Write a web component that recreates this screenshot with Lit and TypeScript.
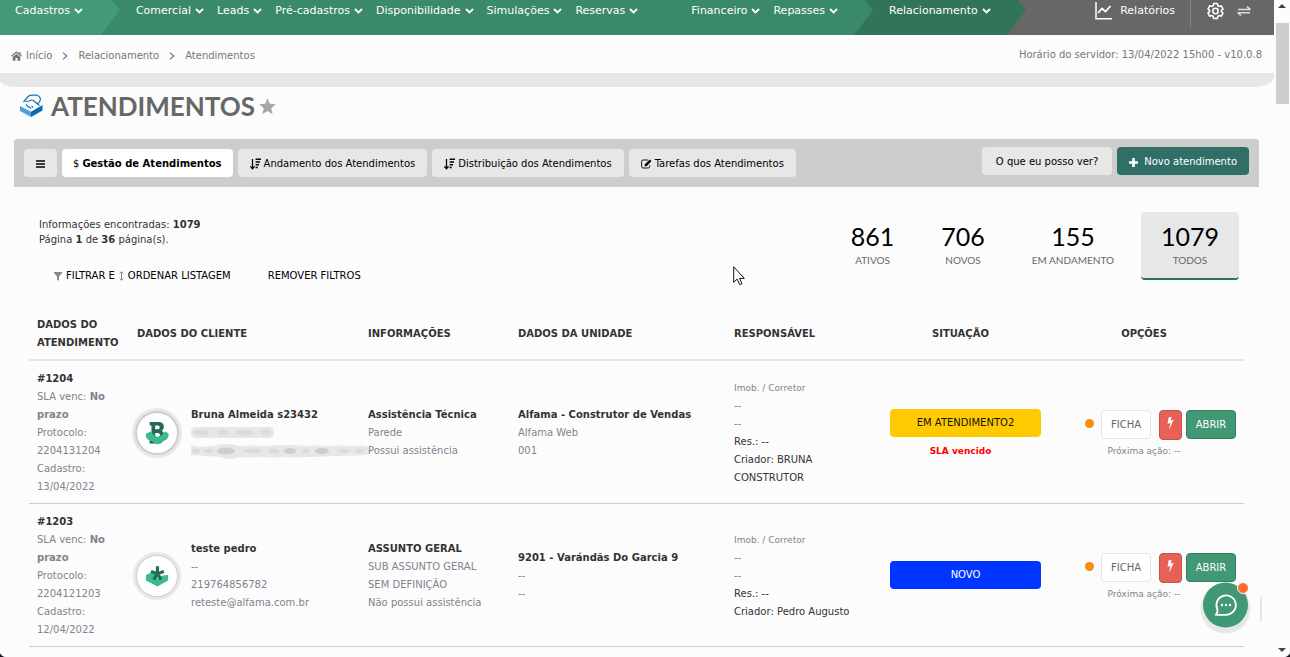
import { LitElement, html, css, svg, nothing } from "lit";
import { customElement } from "lit/decorators.js";
import { classMap } from "lit/directives/class-map.js";

const chevron = html`<svg class="chev" width="9" height="6" viewBox="0 0 9 6" aria-hidden="true">
  <path d="M1 1l3.5 3.4L8 1" fill="none" stroke="currentColor" stroke-width="1.9" />
</svg>`;

const crumbArrow = html`<svg width="6" height="8" viewBox="0 0 6 8" aria-hidden="true">
  <path d="M1 .6L4.7 4 1 7.4" fill="none" stroke="currentColor" stroke-width="1.2" />
</svg>`;

const sortIcon = html`<svg width="11" height="12" viewBox="0 0 11 12" aria-hidden="true">
  <path d="M2.5 1v9.4M.4 8.4l2.1 2.4 2.1-2.4" fill="none" stroke="currentColor" stroke-width="1.3" />
  <path d="M5.6 1.2H11M5.6 4H10M5.6 6.8H9M5.6 9.6H7.7" stroke="currentColor" stroke-width="1.5" />
</svg>`;

const editIcon = html`<svg width="11" height="10" viewBox="0 0 11 10" aria-hidden="true">
  <path d="M7 1H2Q.6 1 .6 2.4v5Q.6 9 2 9h5.2q1.5 0 1.5-1.5V6.2" fill="none" stroke="currentColor" stroke-width=".9" />
  <path d="M3.7 7.2V5.4L8.8.5l1.700 1.600-4.900 5.100z" fill="currentColor" />
</svg>`;

const menuIcon = html`<svg width="9" height="8" viewBox="0 0 9 8" aria-hidden="true">
  <path d="M0 1h9M0 4h9M0 7h9" stroke="currentColor" stroke-width="1.4" />
</svg>`;

const plusIcon = html`<svg width="9" height="9" viewBox="0 0 9 9" aria-hidden="true">
  <path d="M4.5 0v9M0 4.5h9" stroke="currentColor" stroke-width="2.6" />
</svg>`;

const boltIcon = html`<svg width="7" height="12" viewBox="0 0 7 12" aria-hidden="true">
  <path d="M1.7.3h3L3.6 3.4l3-.7L2.8 11.6h-.6L3.5 6 .5 6.700z" fill="currentColor" />
</svg>`;

const letterLogo = svg`
  <path fill="#25695a" fill-rule="evenodd" d="M5 1h10.500Q20.500 1.300 20.500 6.400 20.500 9.200 18 10.600 21 12 21 16 20.500 24 15.500 24.500H5V20h2V5H5zM11 5v4h3q2-.2 2-2 0-1.800-2-2zM11 13v4.500h3q2.300-.3 2.300-2.200 0-2-2.300-2.300z" />
  <path fill="#3dba92" d="M1 13.500l5.500-2 3.500 4.300q3.500 2.500 7.500 0l4.500-4.300 3.500 2v3.500q-2 4-6 5l-6 3.500-6-3.500q-5-1-6.500-5z" />`;

const starLogo = svg`
  <path fill="#3dba92" d="M1 12l6-3 4 2 3 5 5-3.500 6-.5v6L13.500 24.500 1 18z" />
  <path stroke="#25695a" stroke-width="3.400" d="M13.500 10.500V2.500M13.500 10.500L6.500 8M13.500 10.500L20.500 8M13.500 10.500L9.500 17M13.500 10.500L17.500 17" />`;

interface Ticket {
  id: string;
  protocol: string;
  date: string;
  logo: unknown;
  ring: string;
  client: string;
  contact: string[];
  hidden: boolean;
  subject: string;
  details: string[];
  unit: string;
  unitDetails: string[];
  creator: string;
  status: string;
  kind: string;
  late: boolean;
}

const tickets: Ticket[] = [
  {
    id: "#1204", protocol: "2204131204", date: "13/04/2022", logo: letterLogo, ring: "thick",
    client: "Bruna Almeida s23432", contact: [], hidden: true,
    subject: "Assistência Técnica", details: ["Parede", "Possui assistência"],
    unit: "Alfama - Construtor de Vendas", unitDetails: ["Alfama Web", "001"],
    creator: "BRUNA CONSTRUTOR", status: "EM ATENDIMENTO2", kind: "progress", late: true,
  },
  {
    id: "#1203", protocol: "2204121203", date: "12/04/2022", logo: starLogo, ring: "thin",
    client: "teste pedro", contact: ["--", "219764856782", "reteste@alfama.com.br"], hidden: false,
    subject: "ASSUNTO GERAL", details: ["SUB ASSUNTO GERAL", "SEM DEFINIÇÃO", "Não possui assistência"],
    unit: "9201 - Varándãs Do Garcia 9", unitDetails: ["--", "--"],
    creator: "Pedro Augusto", status: "NOVO", kind: "new", late: false,
  },
];

@customElement("app-header")
class AppHeader extends LitElement {
  static styles = css`
    :host { display: block; }
    nav {
      display: flex; height: 35px; background: #676767; color: #fff;
      font: 11px/20px "DejaVu Sans", Verdana, sans-serif; white-space: nowrap;
    }
    .seg {
      display: flex; align-items: flex-start; gap: 13px; padding: 0 35px 0 36px;
      margin-right: -20px; flex: none;
      clip-path: polygon(0 0, calc(100% - 8px) 0, 100% 10px, calc(100% - 19px) 100%, 0 100%);
    }
    .one { background: #439a76; padding-left: 15px; padding-right: 37px; z-index: 3; }
    .two { background: #3a8968; z-index: 2; }
    .three { background: #317457; z-index: 1; }
    .seg, .tools { position: relative; }
    a { color: inherit; text-decoration: none; display: flex; align-items: center; gap: 4px; height: 22px; }
    .apart { margin-left: 40px; }
    .tools { margin-left: auto; display: flex; padding-right: 23px; }
    .tools a { height: 21px; }
    .report { gap: 8px; }
    .line { width: 1px; height: 28px; background: #858585; margin: 0 16px 0 15px; }
    .swap { margin-left: 13px; }
  `;

  private item(label: string, cls = "") {
    return html`<a href="#" class=${cls}>${label}${chevron}</a>`;
  }

  render() {
    return html`<nav>
      <div class="seg one">${this.item("Cadastros")}</div>
      <div class="seg two">
        ${["Comercial", "Leads", "Pré-cadastros", "Disponibilidade", "Simulações", "Reservas"].map((l) => this.item(l))}
        ${this.item("Financeiro", "apart")}${this.item("Repasses")}
      </div>
      <div class="seg three">${this.item("Relacionamento")}</div>
      <div class="tools">
        <a href="#" class="report">
          <svg width="17" height="18" viewBox="0 0 17 18" aria-hidden="true">
            <path d="M1 0v16.700H17" fill="none" stroke="#fff" stroke-width="1.500" />
            <path d="M3 11l4-4.500 3.500 3L15.500 4" fill="none" stroke="#fff" stroke-width="1.800" />
          </svg>Relatórios</a>
        <span class="line"></span>
        <a href="#" aria-label="Configurações">
          <svg width="17" height="18" viewBox="0 0 24 24" aria-hidden="true" fill="none" stroke="#fff" stroke-width="2.200" stroke-linejoin="round">
            <path d="M9.500 1.500h5l.8 3 1.900 1 3-.8 2.400 4.300-2.200 2.100v1.800l2.200 2.100-2.400 4.300-3-.8-1.900 1-.8 3h-5l-.8-3-1.900-1-3 .8L1.400 15l2.200-2.100v-1.800L1.400 9l2.400-4.300 3 .8 1.900-1z" />
            <circle cx="12" cy="12" r="3.800" />
          </svg></a>
        <a href="#" class="swap" aria-label="Alternar">
          <svg width="14" height="10" viewBox="0 0 14 10" aria-hidden="true" fill="none" stroke="#ddd" stroke-width="1.500">
            <path d="M1 3.400h12.500M10 .6l3.300 2.800M13 6.700H.500M4 9.500L.7 6.700" />
          </svg></a>
      </div>
    </nav>`;
  }
}

@customElement("app-root")
class AppRoot extends LitElement {
  static styles = css`
    :host {
      display: flex; height: 100vh; overflow: hidden; background: #fcfcfc; position: relative;
      font: 10px/18px "DejaVu Sans", Verdana, sans-serif; color: #333;
    }
    main { flex: 1; min-width: 0; overflow: hidden; }
    a { color: inherit; text-decoration: none; }
    button { font: inherit; color: inherit; border: 0; padding: 0; background: none; cursor: pointer; }
    svg { flex: none; display: block; }

    .crumbs { display: flex; align-items: center; justify-content: space-between; height: 36px; padding: 2px 12px 0 11px; color: #777; }
    .trail { display: flex; align-items: center; gap: 10px; padding-top: 2px; }
    .home { display: flex; align-items: center; gap: 4px; }
    .band { height: 14px; background: #e7e7e7; border-radius: 0 0 20px 16px / 0 0 10px 7px; }

    .title { display: flex; align-items: center; height: 38px; padding: 0 20px; gap: 8px; }
    h1 { margin: 0; font: 700 26px/32px Lato, sans-serif; color: #676767; }
    .star { margin-left: -4px; }

    .toolbar {
      display: flex; justify-content: space-between; align-items: flex-start;
      margin: 14px 15px 0 14px; padding: 8px 10px 10px; background: #cdcdcd; border-radius: 3px 3px 0 0;
    }
    .group { display: flex; gap: 5px; }
    .tabs { margin-top: 2px; }
    .btn {
      display: flex; align-items: center; gap: 3px; height: 28px; padding: 2px 12px 0;
      border-radius: 4px; background: #e7e7e7; color: #000; white-space: nowrap;
    }
    .active { background: #fff; font-weight: 700; padding: 2px 11px 0; }
    .dollar { font-weight: 400; }
    .help { padding: 2px 14px 0; }
    .primary { background: #2f6f67; color: #fff; gap: 6px; }

    .summary { display: flex; justify-content: space-between; padding: 25px 35px 0 39px; }
    .found { padding-top: 5px; line-height: 15px; }
    .filters { display: flex; gap: 7px; margin-top: 20px; color: #000; }
    .filters button { display: flex; align-items: center; gap: 4px; padding: 0 15px; height: 18px; }
    .stats { display: flex; gap: 7px; font-family: Lato, sans-serif; text-align: center; }
    .stat { height: 68px; padding: 8px 20px 0; border-radius: 4px; box-sizing: border-box; }
    .stat b { display: block; font-weight: 400; font-size: 25px; line-height: 32px; color: #000; }
    .stat span { display: block; font-size: 10px; line-height: 16px; color: #676767; }
    .current { background: #e7e7e7; border-bottom: 2px solid #2f6f67; }

    .list { margin: 22px 30px 0 29px; }
    table { width: 100%; table-layout: fixed; border-collapse: separate; border-spacing: 0; }
    th, td { padding: 9px 8px 7px; text-align: left; vertical-align: middle; box-sizing: border-box; }
    th { border-bottom: 2px solid #e7e7e7; }
    td { border-bottom: 1px solid #cdcdcd; color: #81838f; }
    strong { color: #333; }
    .mid { text-align: center; }
    .c1 { width: 100px; } .c2 { width: 231px; } .c3 { width: 150px; } .c4 { width: 216px; }
    .c5 { width: 151px; } .c6 { width: 167px; } .c7 { width: 200px; }
    .ln { display: block; }
    .ref { padding-right: 0; }
    .ref em { font-style: normal; font-weight: 700; }
    .client { display: flex; align-items: center; gap: 14px; white-space: nowrap; }
    .avatar {
      display: flex; align-items: center; justify-content: center; flex: none;
      width: 40px; height: 40px; border-radius: 50%; background: #fff;
    }
    .thick { box-shadow: 0 0 0 2px #cdcdcd, 0 0 0 5px #e7e7e7; }
    .thin { box-shadow: 0 0 0 1px #cdcdcd, 0 0 0 4px #e7e7e7; }
    .small { font-size: 9px; }
    .dark { color: #333; }
    .pill { height: 28px; line-height: 28px; border-radius: 4px; margin: 3px -5px 5px 5px; }
    .progress { background: #ffcb00; color: #111; }
    .new { background: #0035ff; color: #fff; }
    .late { color: #f00; font-weight: 700; font-size: 9px; }
    .actions { display: flex; justify-content: flex-end; padding-top: 4px; margin-bottom: 2px; height: 30px; }
    .dot { width: 9px; height: 9px; border-radius: 50%; background: #f88f09; margin: 9px 7px 0 0; }
    .act { height: 29px; width: 50px; border-radius: 4px; box-sizing: border-box; color: #fff; }
    .sheet { border: 1px solid #e7e7e7; background: #fff; color: #676767; margin-right: 8px; }
    .bolt { display: flex; justify-content: center; padding-top: 6px; width: 23px; height: 30px; background: #e86159; border: 1px solid #c9524c; margin-right: 4px; }
    .open { background: #419874; border: 1px solid #33805f; }

    .scroll { width: 16px; flex: none; display: flex; flex-direction: column; align-items: center; padding: 4px 0 5px; box-sizing: border-box; }
    .thumb { width: 13px; height: 81px; background: #cdcdcd; margin: 15px 0 auto 1px; }
    .chat { position: absolute; right: 38px; bottom: 22px; width: 52px; height: 54px; }
    .pulse { position: absolute; right: 28px; bottom: 35px; width: 2px; height: 25px; background: #e7e7e7; border-radius: 0 2px 2px 0; }
    .cursor { position: absolute; left: 733px; top: 266px; }
    .corner { position: absolute; bottom: 0; }
    .left { left: 0; }
    .right { right: 0; }
  `;

  private stat(value: string, label: string, current = false) {
    return html`<a href="#" class=${classMap({ stat: true, current })}><b>${value}</b><span>${label}</span></a>`;
  }

  private hiddenContact() {
    return html`<svg width="181" height="36" viewBox="0 0 181 36" aria-hidden="true">
      <rect x="0" y="3" width="83" height="11" rx="5" fill="#e7e7e7" />
      <g fill="#d9dbe1">
        <ellipse cx="10" cy="8.500" rx="8" ry="3" /><ellipse cx="32" cy="8.500" rx="6" ry="3" />
        <ellipse cx="54" cy="8.500" rx="9" ry="3" /><ellipse cx="75" cy="8.500" rx="5" ry="3" />
      </g>
      <path fill="#e7e7e7" d="M0 22q4-1 8 1l16-1q6-2 12-2 7 0 12 2 14-1 27 0 15-1 24-1 8 0 13 1 12-1 23 0l5 0q12-1 21 0 10-1 15 0 5 5 0 9-22 1-33 1-14 1-27 1-12 1-22 0-12 1-22 0-14 1-22 0-6 2-11 2-5 0-9-2Q14 32 0 31z" />
      <g fill="#cdcdcd">
        <ellipse cx="35" cy="27" rx="9" ry="3.500" /><ellipse cx="99" cy="27" rx="6" ry="3" /><ellipse cx="131" cy="27" rx="7" ry="3" />
      </g>
      <g fill="#d9dbe1">
        <ellipse cx="5" cy="27" rx="4" ry="2" /><ellipse cx="17" cy="27" rx="5" ry="2" /><ellipse cx="62" cy="27" rx="9" ry="2.500" />
        <ellipse cx="83" cy="27" rx="5" ry="2.500" /><ellipse cx="115" cy="27" rx="4" ry="2.500" />
        <ellipse cx="153" cy="27" rx="6" ry="2" /><ellipse cx="169" cy="27" rx="4" ry="2" />
      </g>
    </svg>`;
  }

  private row(t: Ticket) {
    return html`<tr>
      <td class="ref">
        <strong class="ln">${t.id}</strong>
        SLA venc: <em>No prazo</em>
        <span class="ln">Protocolo:</span><span class="ln">${t.protocol}</span>
        <span class="ln">Cadastro:</span><span class="ln">${t.date}</span>
      </td>
      <td>
        <div class="client">
          <span class="avatar ${t.ring}"><svg width="24" height="24" viewBox="0 0 26 26" aria-hidden="true">${t.logo}</svg></span>
          <div>
            <strong class="ln">${t.client}</strong>
            ${t.hidden ? this.hiddenContact() : nothing}
            ${t.contact.map((c) => html`<span class="ln">${c}</span>`)}
          </div>
        </div>
      </td>
      <td><strong class="ln">${t.subject}</strong>${t.details.map((d) => html`<span class="ln">${d}</span>`)}</td>
      <td><strong class="ln">${t.unit}</strong>${t.unitDetails.map((d) => html`<span class="ln">${d}</span>`)}</td>
      <td>
        <span class="ln small">Imob. / Corretor</span><span class="ln">--</span><span class="ln">--</span>
        <span class="ln dark">Res.: --</span><span class="ln dark">Criador: ${t.creator}</span>
      </td>
      <td class="mid">
        <div class="pill ${t.kind}">${t.status}</div>
        ${t.late ? html`<span class="ln late">SLA vencido</span>` : nothing}
      </td>
      <td class="mid">
        <div class="actions">
          <span class="dot"></span>
          <button class="act sheet">FICHA</button>
          <button class="act bolt" aria-label="Ação rápida">${boltIcon}</button>
          <button class="act open">ABRIR</button>
        </div>
        <span class="ln small">Próxima ação: --</span>
      </td>
    </tr>`;
  }

  render() {
    return html`
      <main>
        <app-header></app-header>
        <div class="crumbs">
          <div class="trail">
            <a href="#" class="home">
              <svg width="11" height="10" viewBox="0 0 11 10" aria-hidden="true">
                <path d="M.4 5.200L5.500 1l5.100 4.200M8.900 1v2.500" fill="none" stroke="currentColor" stroke-width="1.300" />
                <path d="M5.500 2.700L9.300 6v3.700H6.500V7h-2v2.700H1.700V6z" fill="currentColor" />
              </svg>Início</a>
            ${crumbArrow}<a href="#">Relacionamento</a>${crumbArrow}<span>Atendimentos</span>
          </div>
          <span>Horário do servidor: 13/04/2022 15h00 - v10.0.8</span>
        </div>
        <div class="band"></div>
        <div class="title">
          <svg width="23" height="24" viewBox="0 0 23 24" aria-hidden="true">
            <path d="M0 12l11 5.800V23L0 17z" fill="#4ba3dd" />
            <path d="M11 17.800L22.500 11v5.500L11 23z" fill="#0a6cb0" />
            <path d="M1 12l7-4 13 2.500-9.800 6.500z" fill="#fff" />
            <path d="M3.500 8L8 2.500q2-1.500 5-1.300h4q3.200 1 3.500 4L19.500 8q-1 1.700-3 1.300L14 7q-2-2-5 0L5.500 7.500M16.500 9.300l3 2.200M6 10.500l3 2.800M9 12.800l2 1.800M11.500 12l1.500 1.500" fill="none" stroke="#1673b5" stroke-width="1.200" />
          </svg>
          <h1>ATENDIMENTOS</h1>
          <svg class="star" width="17" height="17" viewBox="0 0 17 17" aria-hidden="true">
            <path d="M8.500.300l2.300 5.500 5.900.500-4.500 3.900 1.400 6L8.500 13l-5.100 3.200 1.400-6L.300 6.300l5.900-.5z" fill="#a4a8a8" />
          </svg>
        </div>

        <div class="toolbar">
          <div class="group tabs">
            <button class="btn" aria-label="Menu">${menuIcon}</button>
            <button class="btn active"><span class="dollar">$</span>Gestão de Atendimentos</button>
            <button class="btn">${sortIcon}Andamento dos Atendimentos</button>
            <button class="btn">${sortIcon}Distribuição dos Atendimentos</button>
            <button class="btn">${editIcon}Tarefas dos Atendimentos</button>
          </div>
          <div class="group">
            <button class="btn help">O que eu posso ver?</button>
            <button class="btn primary">${plusIcon}Novo atendimento</button>
          </div>
        </div>

        <div class="summary">
          <div>
            <div class="found">Informações encontradas: <strong>1079</strong><br />Página <strong>1</strong> de <strong>36</strong> página(s).</div>
            <div class="filters">
              <button>
                <svg width="8" height="9" viewBox="0 0 8 9" aria-hidden="true"><path d="M0 0h8v1L5 4.500V9L3 7.500v-3L0 1z" fill="#8a8690" /></svg>
                FILTRAR E
                <svg width="5" height="10" viewBox="0 0 5 10" aria-hidden="true"><path d="M2.500 1v8M.7 2.500L2.500.700l1.800 1.800M.7 7.500l1.800 1.800 1.800-1.800" fill="none" stroke="#8a8690" /></svg>
                ORDENAR LISTAGEM
              </button>
              <button>REMOVER FILTROS</button>
            </div>
          </div>
          <div class="stats">
            ${this.stat("861", "ATIVOS")}${this.stat("706", "NOVOS")}
            ${this.stat("155", "EM ANDAMENTO")}${this.stat("1079", "TODOS", true)}
          </div>
        </div>

        <div class="list">
          <table>
            <thead>
              <tr>
                <th class="c1 ref">DADOS DO ATENDIMENTO</th>
                <th class="c2">DADOS DO CLIENTE</th>
                <th class="c3">INFORMAÇÕES</th>
                <th class="c4">DADOS DA UNIDADE</th>
                <th class="c5">RESPONSÁVEL</th>
                <th class="c6 mid">SITUAÇÃO</th>
                <th class="c7 mid">OPÇÕES</th>
              </tr>
            </thead>
            <tbody>${tickets.map((t) => this.row(t))}</tbody>
          </table>
        </div>
      </main>

      <div class="scroll" aria-hidden="true">
        <svg width="8" height="4" viewBox="0 0 8 4"><path d="M0 4l4-4 4 4z" fill="#444" /></svg>
        <div class="thumb"></div>
        <svg width="8" height="4" viewBox="0 0 8 4"><path d="M0 0h8L4 4z" fill="#444" /></svg>
      </div>

      <svg class="cursor" width="13" height="20" viewBox="0 0 13 20" aria-hidden="true">
        <path d="M.700.800v15.500l3.400-3.200 2.700 5.600 2.200-1-2.500-5.300h4.800z" fill="#fff" stroke="#112" />
      </svg>
      <button class="chat" aria-label="Abrir chat">
        <svg width="52" height="54" viewBox="0 0 52 54" aria-hidden="true">
          <circle cx="25.500" cy="27.500" r="25" fill="#e7e7e7" />
          <circle cx="25.500" cy="24" r="22.500" fill="#419874" />
          <path d="M17.500 33.800H26a9.700 9.700 0 1 0-8.500-5.200q.3 3-1.700 5.200z" fill="none" stroke="#fff" stroke-width="1.800" stroke-linejoin="round" />
          <circle cx="22" cy="24" r="1.200" fill="#fff" /><circle cx="26" cy="24" r="1.200" fill="#fff" /><circle cx="30" cy="24" r="1.200" fill="#fff" />
          <circle cx="43" cy="7" r="5.500" fill="#ff6d2d" stroke="#fcfcfc" />
        </svg>
      </button>
      <span class="pulse"></span>
      <svg class="corner left" width="5" height="4" viewBox="0 0 5 4" aria-hidden="true"><path d="M0 0q1 3 5 4H0z" fill="#112" /></svg>
      <svg class="corner right" width="5" height="4" viewBox="0 0 5 4" aria-hidden="true"><path d="M5 0Q4 3 0 4h5z" fill="#112" /></svg>
    `;
  }
}
